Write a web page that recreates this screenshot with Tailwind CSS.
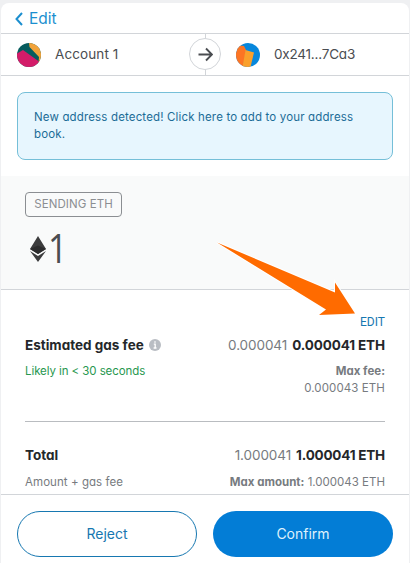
<!DOCTYPE html>
<html lang="en">
<head>
<meta charset="utf-8">
<title>Confirm transaction</title>
<script src="https://cdn.jsdelivr.net/npm/@tailwindcss/browser@4"></script>
</head>
<body class="w-[410px] h-[563px] overflow-hidden bg-[#eff0f2] font-[Inter,sans-serif] [font-feature-settings:'cv11'] pt-[3px] pl-px pr-[1px]">
<main class="relative h-[560px] flex flex-col bg-white rounded-t-[8px] text-[#24272a] whitespace-nowrap">
  <header class="h-[31px] shrink-0 border-b border-[#d2d5d9] flex items-center pl-[14px] pt-px text-[#1c8fcf]">
    <svg class="w-[8px] h-[14px] mr-[6px]" viewBox="0 0 8 14" fill="none" stroke="currentColor" stroke-width="2"><path d="M7 1 1.5 7 7 13"/></svg>
    <span class="text-[15.500px] leading-5">Edit</span>
  </header>
  <section class="relative h-[42px] shrink-0 border-b border-[#d2d5d9] flex text-[13.500px] text-[#4a4d51]">
    <div class="w-[205px] border-r border-[#d2d5d9] flex items-center pl-4">
      <svg class="w-6 h-6 mr-[14px]" viewBox="0 0 24 24"><defs><clipPath id="a"><circle cx="12" cy="12" r="12"/></clipPath></defs><g clip-path="url(#a)"><path fill="#075c5e" d="M0 0h24v24H0z"/><path fill="#f2a33a" d="M12 0 24 0V24L21.500 20 22 14 12.500 4z"/><path fill="#d31c69" d="M-1 11 6 7 22 18.500 18 26H0z"/></g></svg>
      <span class="tracking-[0.1px]">Account 1</span>
    </div>
    <div class="flex items-center pl-[30px]">
      <svg class="w-6 h-6 mr-[14px]" viewBox="0 0 24 24"><defs><clipPath id="b"><circle cx="12" cy="12" r="12"/></clipPath></defs><g clip-path="url(#b)"><path fill="#0787dc" d="M0 0h24v24H0z"/><path fill="#fc7524" d="M0 2 8 3 10 7 7 24H0z"/><path fill="#faa02b" d="M9.500 7 18 9.500 14.500 24H6.500z"/></g></svg>
      <span class="tracking-[-0.2px]">0x241...7Ca3</span>
    </div>
    <div class="absolute left-[188px] top-[4px] w-8 h-8 rounded-full border border-[#d2d5d9] bg-white flex items-center justify-center">
      <svg class="w-[15px] h-[15px]" viewBox="0 0 15 15" fill="none" stroke="#4a4d51" stroke-width="1.900"><path d="M.5 7.500H13.500M8 1.500 14 7.500 8 13.500"/></svg>
    </div>
  </section>
  <div class="mx-4 mt-4 h-[68px] shrink-0 rounded-[8px] border border-[#75bfd8] bg-[#e7f6fe] px-4 pt-[16px] text-[11.500px] tracking-[0.150px] leading-[17px] text-[#1b6c97]">
    <p>New address detected! Click here to add to your address</p>
    <p>book.</p>
  </div>
  <section class="mt-4 h-[114px] shrink-0 bg-[#f9fafa] border-b border-[#d2d5d9] px-6 pt-4">
    <div class="w-[97px] h-[25px] rounded-[4px] border border-[#8b8e92] text-[#8b8e92] text-[11.500px] tracking-[0.080px] flex items-center justify-center">SENDING ETH</div>
    <div class="flex items-center h-[46px] mt-[9px] pl-[5px] text-[#4a4d51]">
      <svg class="w-4 h-[26px]" viewBox="0 0 16 26" fill="#3c3c3d"><path d="M8 0 16 13 8 18 0 13zM0 15 8 20 16 15 8 26z"/><path d="M0 13 8 9.500 16 13 8 18z" fill="#2c2c2d"/></svg>
      <span class="text-[40px] ml-[2px] -mt-[2px] inline-block origin-left scale-x-85 font-['Open_Sans']">1</span>
    </div>
  </section>
  <section class="px-6 h-[205px] shrink-0 border-b border-[#d2d5d9] text-[11.500px] text-[#777b80]">
    <div class="text-right text-[12px] leading-4 pt-6 h-10 text-[#1778b1] font-[Roboto,sans-serif]">EDIT</div>
    <div class="flex justify-between text-[13.500px] leading-5 mt-[5px]">
      <div class="flex items-center text-[#24272a]"><span class="font-bold">Estimated gas fee</span>
        <svg class="w-3 h-3 ml-[5px]" viewBox="0 0 12 12"><circle cx="6" cy="6" r="6" fill="#b9bdc3"/><path d="M6 2.300v1.500M4.800 5.200H6.200V9M4.600 9H7.500" stroke="#fff" stroke-width="1.300" fill="none"/></svg>
      </div>
      <div class="flex gap-[5px]"><span class="tracking-[-0.080px]">0.000041</span><b class="text-[#24272a] tracking-[-0.110px]">0.000041 ETH</b></div>
    </div>
    <div class="flex justify-between leading-[17px] mt-[8px]">
      <span class="text-[#28974f] tracking-[-0.080px]">Likely in &lt; 30 seconds</span>
      <div class="text-right"><b>Max fee:</b><br><span class="tracking-[0.100px]">0.000043 ETH</span></div>
    </div>
    <hr class="border-[#b9bcc0] mt-[24px]">
    <div class="flex justify-between text-[13.500px] leading-5 mt-[23px]">
      <b class="text-[#24272a]">Total</b>
      <div class="flex gap-[5px]"><span class="tracking-[-0.080px]">1.000041</span><b class="text-[#24272a] tracking-[-0.200px]">1.000041 ETH</b></div>
    </div>
    <div class="flex justify-between leading-[17px] mt-[9px]">
      <span class="tracking-[0.060px]">Amount + gas fee</span>
      <div><b>Max amount:</b> <span>1.000043 ETH</span></div>
    </div>
  </section>
  <footer class="flex gap-4 px-4 pt-4 text-[14px]">
    <button class="w-[180px] h-[46px] rounded-full border border-[#1778b1] text-[#1778b1] pb-[2px]">Reject</button>
    <button class="w-[180px] h-[46px] rounded-full bg-[#037dd6] text-[#dff1fc] pb-[2px]">Confirm</button>
  </footer>
  <svg class="absolute left-[209px] top-[233px] w-[150px] h-[85px]" viewBox="210 236 150 85"><path d="M217 242.500 335 292.500V282.500L355 313.500 319 315 326 309.500z" fill="#ff6b00" stroke="#fff" stroke-width="2" paint-order="stroke"/></svg>
</main>
</body>
</html>
